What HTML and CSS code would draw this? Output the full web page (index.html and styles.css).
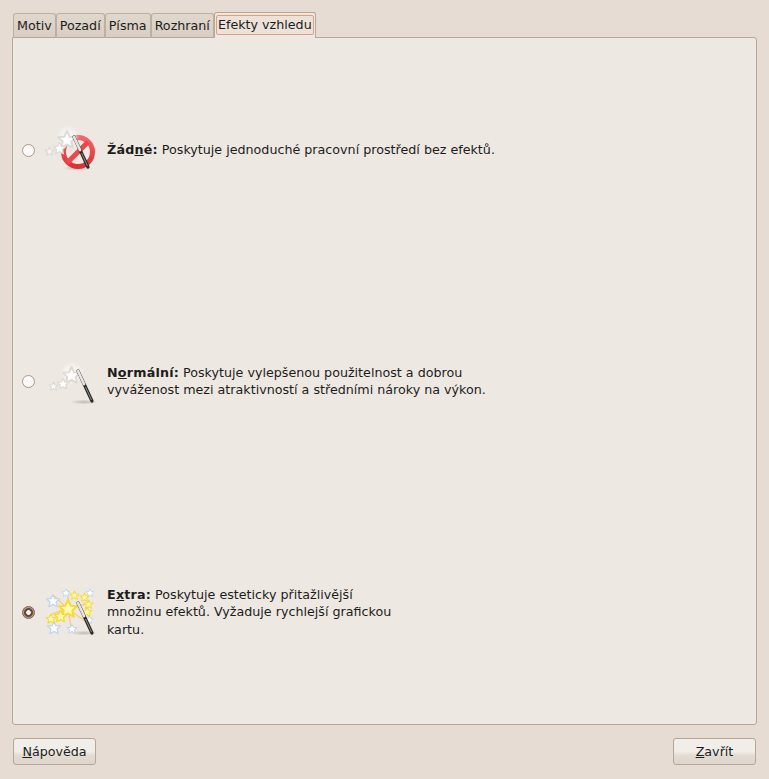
FILE: index.html
```html
<!DOCTYPE html>
<html lang="cs">
<head>
    <meta charset="UTF-8">
    <meta name="viewport" content="width=device-width, initial-scale=1.0">
    <title>Předvolby vzhledu</title>
    <link rel="stylesheet" href="styles.css">
</head>
<body>
    <svg class="defs" width="0" height="0" aria-hidden="true">
        <defs>
            <symbol id="star" viewBox="-12 -12 24 24">
                <polygon points="0,-10 2.9,-3.6 9.8,-3 4.7,1.6 6.2,8.4 0,4.9 -6.2,8.4 -4.7,1.6 -9.8,-3 -2.9,-3.6" stroke-width="2.2" stroke-linejoin="round"/>
            </symbol>
            <symbol id="wand" viewBox="0 0 48 48" overflow="visible">
                <line x1="0" y1="0" x2="14" y2="30" stroke="#2b2b2b" stroke-width="3.2" stroke-linecap="round"/>
                <line x1="0" y1="0" x2="6" y2="13" stroke="#e4e3df" stroke-width="2.8" stroke-linecap="round"/>
                <line x1="7.5" y1="16" x2="13.5" y2="29" stroke="#8a8a82" stroke-width="1"/>
            </symbol>
            <radialGradient id="glow">
                <stop offset="0" stop-color="#fff" stop-opacity="0.95"/>
                <stop offset="1" stop-color="#fff" stop-opacity="0"/>
            </radialGradient>
            <radialGradient id="shadow">
                <stop offset="0" stop-color="#8a8378" stop-opacity="0.45"/>
                <stop offset="1" stop-color="#8a8378" stop-opacity="0"/>
            </radialGradient>
            <linearGradient id="ring" x1="0" y1="0" x2="0" y2="1">
                <stop offset="0" stop-color="#f4656a"/>
                <stop offset="1" stop-color="#dc3038"/>
            </linearGradient>
            <filter id="soft" x="-20%" y="-20%" width="140%" height="140%">
                <feGaussianBlur stdDeviation="0.4"/>
            </filter>
        </defs>
    </svg>

    <div class="tabs">
        <div class="tab">Motiv</div>
        <div class="tab">Pozadí</div>
        <div class="tab">Písma</div>
        <div class="tab">Rozhraní</div>
        <div class="tab active"><span class="focus">Efekty vzhledu</span></div>
    </div>

    <main class="panel">
        <div class="option">
            <span class="radio"></span>
            <svg class="icon" width="48" height="48" viewBox="0 0 48 48">
                <ellipse cx="31" cy="42" rx="15" ry="3" fill="url(#shadow)"/>
                <g filter="url(#soft)">
                    <circle cx="31" cy="26" r="14.5" fill="#f6e6e0" fill-opacity="0.55" stroke="url(#ring)" stroke-width="5"/>
                    <line x1="20" y1="37" x2="41" y2="16" stroke="#e8484f" stroke-width="5"/>
                </g>
                <circle cx="21" cy="11" r="12" fill="url(#glow)"/>
                <g filter="url(#soft)">
                    <use href="#star" class="star-white" x="9" y="3" width="22" height="22"/>
                    <use href="#star" class="star-white" x="5" y="15" width="15" height="15"/>
                    <use href="#star" class="star-pale" x="-3" y="20" width="11" height="11"/>
                    <use href="#wand" x="27" y="11" width="48" height="48"/>
                </g>
            </svg>
            <p class="text"><b>Žád<u>n</u>é:</b> Poskytuje jednoduché pracovní prostředí bez efektů.</p>
        </div>

        <div class="option">
            <span class="radio"></span>
            <svg class="icon" width="48" height="48" viewBox="0 0 48 48">
                <ellipse cx="37" cy="45" rx="14" ry="2.5" fill="url(#shadow)"/>
                <circle cx="25" cy="16" r="12" fill="url(#glow)"/>
                <g filter="url(#soft)">
                    <use href="#star" class="star-white" x="14" y="8" width="21" height="21"/>
                    <use href="#star" class="star-white" x="9" y="20" width="14" height="14"/>
                    <use href="#star" class="star-pale" x="1" y="24" width="11" height="11"/>
                    <use href="#wand" x="31" y="14" width="48" height="48"/>
                </g>
            </svg>
            <p class="text"><b>N<u>o</u>rmální:</b> Poskytuje vylepšenou použitelnost a dobrou<br>vyváženost mezi atraktivností a středními nároky na výkon.</p>
        </div>

        <div class="option">
            <span class="radio checked"></span>
            <svg class="icon" width="48" height="48" viewBox="0 0 48 48">
                <ellipse cx="37" cy="45" rx="14" ry="2.5" fill="url(#shadow)"/>
                <g class="rays">
                    <line x1="21" y1="21" x2="21" y2="2"/>
                    <line x1="21" y1="21" x2="6" y2="7"/>
                    <line x1="21" y1="21" x2="38" y2="33"/>
                    <line x1="21" y1="21" x2="24" y2="39"/>
                    <line x1="21" y1="21" x2="39" y2="16"/>
                    <line x1="21" y1="21" x2="5" y2="26"/>
                </g>
                <g filter="url(#soft)">
                    <use href="#star" class="star-blue" x="-2" y="5" width="16" height="16"/>
                    <use href="#star" class="star-blue" x="-1" y="32" width="16" height="16"/>
                    <use href="#star" class="star-blue" x="19" y="35" width="12" height="12"/>
                    <use href="#star" class="star-blue" x="14" y="0" width="10" height="10"/>
                    <use href="#star" class="star-blue" x="38" y="0" width="10" height="10"/>
                    <use href="#star" class="star-blue" x="37" y="27" width="10" height="10"/>
                    <use href="#star" class="star-yellow" x="10" y="10" width="22" height="22"/>
                    <use href="#star" class="star-yellow" x="6" y="21" width="15" height="15"/>
                    <use href="#star" class="star-yellow" x="-2" y="25" width="12" height="12"/>
                    <use href="#star" class="star-yellow" x="22" y="2" width="11" height="11"/>
                    <use href="#star" class="star-yellow" x="32" y="4" width="11" height="11"/>
                    <use href="#star" class="star-yellow" x="36" y="11" width="11" height="11"/>
                    <use href="#star" class="star-yellow" x="34" y="18" width="12" height="12"/>
                    <use href="#wand" x="31" y="15" width="48" height="48"/>
                </g>
            </svg>
            <p class="text"><b>E<u>x</u>tra:</b> Poskytuje esteticky přitažlivější<br>množinu efektů. Vyžaduje rychlejší grafickou<br>kartu.</p>
        </div>
    </main>

    <footer class="buttons">
        <button class="btn"><u>N</u>ápověda</button>
        <button class="btn"><u>Z</u>avřít</button>
    </footer>
</body>
</html>
```

FILE: styles.css
```css
body {
    box-sizing: border-box;
    height: 779px;
    margin: 0;
    padding: 12px;
    display: flex;
    flex-direction: column;
    overflow: hidden;
    background-color: #e6dcd3;
    color: #1c1c1c;
    font-family: "DejaVu Sans", sans-serif;
    font-size: 12.7px;
}

.defs {
    position: absolute;
}

/* tabs */
.tabs {
    display: flex;
    align-items: flex-end;
    height: 26px;
    padding-left: 1px;
    margin-bottom: -1px;
    position: relative;
    z-index: 1;
}

.tab {
    box-sizing: border-box;
    height: 25px;
    padding: 3px 3px 0 3px;
    background: linear-gradient(#e0d7cd, #d8cec3);
    border: 1px solid #bdb0a2;
    border-bottom-color: #b5a899;
    border-radius: 3px 3px 0 0;
    white-space: nowrap;
    line-height: 17px;
}

.tab.active {
    height: 26px;
    padding: 2px 1px 0;
    background-color: #eee8e2;
    background-image: none;
    border-color: #b5a899;
    border-bottom: none;
}

.focus {
    display: block;
    height: 20px;
    line-height: 17px;
    box-sizing: border-box;
    padding: 0 1px;
    background: #ece2da;
    border: 1px solid #df9f80;
    border-radius: 2px;
}

/* main panel */
.panel {
    box-sizing: border-box;
    height: 688px;
    display: grid;
    grid-template-rows: repeat(3, 1fr);
    row-gap: 7px;
    padding: 0 9px;
    background-color: #eee8e2;
    border: 1px solid #b5a899;
    border-radius: 0 3px 3px 3px;
}

.option {
    display: flex;
    align-items: center;
}

.radio {
    box-sizing: border-box;
    flex: none;
    width: 13px;
    height: 13px;
    border: 1px solid #a8978a;
    border-radius: 50%;
    background: #fbfaf8;
}

.radio.checked {
    border-color: #7c6454;
    background: radial-gradient(circle, #fff 0 2px, #6e4632 2.6px 4px, #b59a88 5px);
}

.icon {
    flex: none;
    margin-left: 12px;
    margin-right: 12px;
    overflow: visible;
}

.text {
    margin: 0;
    line-height: 17.5px;
}

.text b {
    letter-spacing: 0.2px;
}

.star-white {
    fill: #fff;
    stroke: #dcdbd6;
}

.star-pale {
    fill: #f7f6f2;
    stroke: #d9d8d2;
}

.star-blue {
    fill: #fff;
    stroke: #c3d7ef;
}

.star-yellow {
    fill: #fff9b8;
    stroke: #f5dc35;
}

.rays line {
    stroke: #f6c46c;
    stroke-width: 1.5;
    stroke-opacity: 0.75;
}

/* bottom buttons */
.buttons {
    display: flex;
    justify-content: space-between;
    margin-top: 13px;
    padding: 0 1px;
}

.btn {
    box-sizing: border-box;
    width: 83px;
    height: 27px;
    padding: 0;
    font: inherit;
    color: #1c1c1c;
    background: linear-gradient(#f1ede8 0 50%, #e4dcd3 65%, #ddd4ca);
    border: 1px solid #b5a899;
    border-radius: 3px;
}
```
